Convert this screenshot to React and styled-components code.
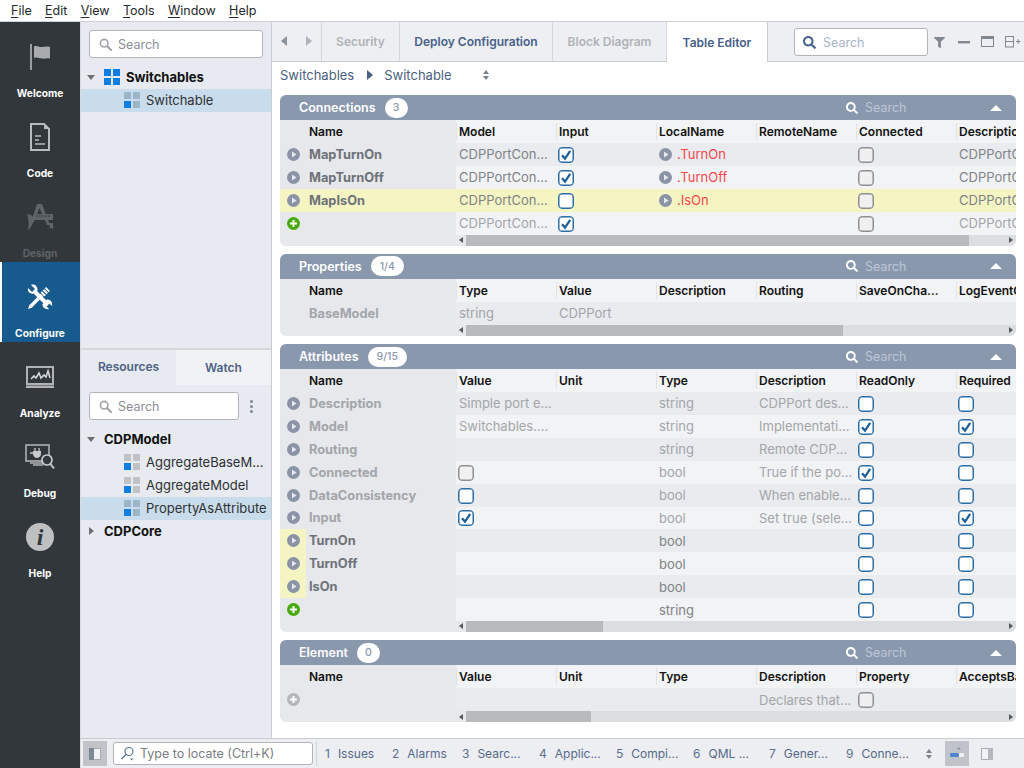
import React from "react";
import styled, { createGlobalStyle } from "styled-components";
import { FaFilter, FaSearch } from "react-icons/fa";

const GlobalStyle = createGlobalStyle`
  html, body {
    margin: 0;
    padding: 0;
    height: 100%;
    overflow: hidden;
  }
  body {
    font-family: Inter, "Noto Sans", sans-serif;
    background: #fff;
  }
  * {
    box-sizing: border-box;
  }
`;

const Page = styled.div`
  width: 1024px;
  height: 768px;
  display: flex;
  flex-direction: column;
  overflow: hidden;
`;

const MenuBar = styled.div`
  height: 22px;
  flex: none;
  display: flex;
  align-items: center;
  gap: 13.3px;
  padding: 0 0 1px 11px;
  font-size: 12.5px;
  color: #26282b;
  background: #fff;
  border-bottom: 1px solid #cfd1d4;
`;

const MenuItem = styled.span`
  u {
    text-underline-offset: 2px;
  }
`;

const Body = styled.div`
  flex: 1;
  min-height: 0;
  display: flex;
`;

const SideBar = styled.div`
  width: 80px;
  flex: none;
  background: #32373b;
  display: flex;
  flex-direction: column;
`;

const SideItem = styled.div`
  height: 80px;
  flex: none;
  display: flex;
  flex-direction: column;
  align-items: center;
  padding-top: 18px;
  background: ${(p) => (p.$active ? "#165a8e" : "transparent")};
  border-left: ${(p) => (p.$active ? "2px solid #fff" : "0")};
  padding-right: ${(p) => (p.$active ? "2px" : "0")};
`;

const SideIcon = styled.div`
  height: 34px;
  display: flex;
  align-items: center;
  justify-content: center;
  color: #fff;
`;

const SideLabel = styled.div`
  margin-top: 12px;
  font-size: 10.2px;
  line-height: 14px;
  font-weight: 700;
  color: ${(p) => (p.$off ? "#5f6468" : "#fff")};
`;

const HelpDisc = styled.div`
  width: 28px;
  height: 28px;
  border-radius: 50%;
  background: #bfc0c1;
  color: #32373b;
  display: flex;
  align-items: center;
  justify-content: center;
  font-family: "Liberation Serif", serif;
  font-style: italic;
  font-weight: 700;
  font-size: 24px;
`;

const Content = styled.div`
  flex: 1;
  min-width: 0;
  display: flex;
  flex-direction: column;
`;

const Upper = styled.div`
  flex: 1;
  min-height: 0;
  display: flex;
`;

const TreeColumn = styled.div`
  width: 192px;
  flex: none;
  display: flex;
  flex-direction: column;
  background: #e7eaf0;
  border-left: 1px solid #d8dadd;
  border-right: 1px solid #c9cbce;
`;

const TreePane = styled.div`
  height: 328px;
  flex: none;
  padding-top: 8px;
  border-bottom: 2px solid #d5d7da;
`;

const LowerPane = styled.div`
  flex: 1;
  min-height: 0;
`;

const SearchRow = styled.div`
  display: flex;
  align-items: center;
  padding: 0 8px;
  margin-bottom: ${(p) => p.$mb}px;
`;

const SearchBox = styled.div`
  flex: 1;
  height: 28px;
  display: flex;
  align-items: center;
  gap: 6px;
  padding-left: 9px;
  background: #fff;
  border: 1px solid #b2b4b7;
  border-radius: 3px;
  font-size: 12.5px;
  color: #8b8e93;
`;

const KebabDots = styled.div`
  width: 24px;
  flex: none;
  display: flex;
  flex-direction: column;
  align-items: center;
  gap: 2px;
  i {
    width: 3px;
    height: 3px;
    border-radius: 50%;
    background: #7e8791;
  }
`;

const TreeRow = styled.div`
  height: 23px;
  display: flex;
  align-items: center;
  padding: 0 0 1px ${(p) => p.$indent}px;
  gap: 6px;
  font-size: 13px;
  white-space: nowrap;
  overflow: hidden;
  font-weight: ${(p) => (p.$bold ? 700 : 400)};
  color: ${(p) => (p.$bold ? "#111" : "#2e3033")};
  background: ${(p) => (p.$selected ? "#c9dcec" : "transparent")};
`;

const Caret = styled.span`
  width: 0;
  height: 0;
  flex: none;
  margin-right: 3px;
  ${(p) =>
    p.$open
      ? "border-left: 4px solid transparent; border-right: 4px solid transparent; border-top: 5px solid #6b6e72;"
      : "border-top: 4px solid transparent; border-bottom: 4px solid transparent; border-left: 5px solid #6b6e72; margin-left: 2px; margin-right: 4px;"}
`;

const SideTabs = styled.div`
  height: 35px;
  display: flex;
  margin-bottom: 7px;
`;

const SideTab = styled.div`
  flex: 1;
  display: flex;
  align-items: center;
  justify-content: center;
  font-size: 12px;
  font-weight: 600;
  color: #4b6285;
  padding-bottom: ${(p) => (p.$light ? "0" : "2px")};
  background: ${(p) => (p.$light ? "#f0f2f5" : "transparent")};
`;

const Main = styled.div`
  flex: 1;
  min-width: 0;
  display: flex;
  flex-direction: column;
  background: #fff;
`;

const TabBar = styled.div`
  height: 40px;
  flex: none;
  display: flex;
  align-items: stretch;
  background: #edeff2;
  border-bottom: 1px solid #c9cbce;
`;

const NavArrows = styled.div`
  width: 50px;
  flex: none;
  display: flex;
  align-items: center;
  justify-content: center;
  gap: 19px;
  padding-bottom: 2px;
  border-right: 1px solid #d4d6d9;
`;

const Arrow = styled.span`
  width: 0;
  height: 0;
  border-top: 5px solid transparent;
  border-bottom: 5px solid transparent;
  ${(p) => (p.$left ? "border-right" : "border-left")}: 6px solid ${(p) => p.$color};
`;

const SmallArrow = styled(Arrow)`
  border-top-width: 3.5px;
  border-bottom-width: 3.5px;
  ${(p) => (p.$left ? "border-right-width" : "border-left-width")}: 4px;
`;

const Tab = styled.div`
  width: ${(p) => p.$w}px;
  flex: none;
  display: flex;
  align-items: center;
  justify-content: center;
  font-size: 12px;
  font-weight: 600;
  color: ${(p) => (p.$off ? "#b0b2b6" : "#48608a")};
  background: ${(p) => (p.$active ? "#fff" : "transparent")};
  border-right: 1px solid #d4d6d9;
  ${(p) => p.$active && "margin-bottom: -1px; border-right-color: #c9cbce;"}
`;

const TabTools = styled.div`
  flex: 1;
  display: flex;
  align-items: center;
  padding: 1px 0 0 26px;
`;

const TabSearch = styled.div`
  width: 134px;
  height: 28px;
  display: flex;
  align-items: center;
  gap: 7px;
  padding-left: 8px;
  background: #fff;
  border: 1px solid #b2b4b7;
  border-radius: 3px;
  font-size: 12.5px;
  color: #a9b4c6;
`;

const ToolIcons = styled.div`
  display: flex;
  align-items: center;
  margin-left: 6px;
  gap: 10px;
`;

const Crumbs = styled.div`
  height: 33px;
  flex: none;
  display: flex;
  align-items: center;
  padding: 0 0 8px 8px;
  font-size: 13px;
  color: #4a6080;
`;

const CrumbSep = styled.span`
  width: 0;
  height: 0;
  margin: 0 11px 0 13px;
  border-top: 5px solid transparent;
  border-bottom: 5px solid transparent;
  border-left: 6px solid #4a6080;
`;

const UpDown = styled.span`
  display: inline-flex;
  flex-direction: column;
  gap: 2px;
  margin-left: ${(p) => p.$ml}px;
  i {
    width: 0;
    height: 0;
    border-left: 3.5px solid transparent;
    border-right: 3.5px solid transparent;
  }
  i:first-child {
    border-bottom: 4px solid #7a8088;
  }
  i:last-child {
    border-top: 4px solid #7a8088;
  }
`;

const Panels = styled.div`
  display: flex;
  flex-direction: column;
  gap: 8.3px;
  padding: 0 8px;
`;

const Panel = styled.section`
  border-radius: 6px;
  overflow: hidden;
  background: #e6e8ec;
`;

const PanelHead = styled.div`
  height: 25px;
  display: flex;
  align-items: center;
  padding-left: 19px;
  background: #8a98ae;
  color: #fff;
  font-size: 12.5px;
  font-weight: 600;
`;

const CountPill = styled.span`
  min-width: 23px;
  height: 20px;
  margin-left: 9px;
  padding: 0 ${(p) => (p.$wide ? "9px" : "4px")};
  display: flex;
  align-items: center;
  justify-content: center;
  border-radius: 10px;
  background: #fff;
  color: #8a98ae;
  font-size: 10.5px;
  font-weight: 500;
`;

const HeadSearch = styled.div`
  margin-left: auto;
  width: 170px;
  display: flex;
  align-items: center;
  gap: 7px;
  font-weight: 400;
  color: #bcc6d5;
  font-size: 12.5px;
`;

const Collapse = styled.span`
  margin-left: auto;
  margin-right: 14px;
  width: 0;
  height: 0;
  border-left: 6px solid transparent;
  border-right: 6px solid transparent;
  border-bottom: 6px solid #fff;
`;

const Row = styled.div`
  height: ${(p) => (p.$head ? "23px" : "22.9px")};
  display: flex;
  overflow: hidden;
  background: ${(p) => (p.$yellow ? "#f5f5c3" : p.$shade ? "#e9ebee" : "#f2f3f5")};
`;

const NameCell = styled.div`
  width: 176px;
  flex: none;
  display: flex;
  align-items: center;
  font-size: ${(p) => (p.$head ? "12px" : "12.8px")};
  font-weight: ${(p) => (p.$head ? 600 : 700)};
  background: ${(p) => (p.$yellow ? "transparent" : "#e6e8ec")};
  color: ${(p) => (p.$head ? "#111" : p.$dim ? "#a3a5a9" : "#6e7278")};
`;

const NameIconSlot = styled.div`
  width: 26px;
  height: 100%;
  flex: none;
  display: flex;
  align-items: center;
  justify-content: center;
  margin-right: 3px;
  background: ${(p) => (p.$yellow ? "#f5f5c3" : "transparent")};
`;

const Cell = styled.div`
  width: 100px;
  flex: none;
  display: flex;
  align-items: center;
  gap: 5px;
  padding-left: 3px;
  white-space: nowrap;
  overflow: hidden;
  font-size: 13px;
  color: ${(p) => (p.$dim ? "#a3a5a9" : "#7f8287")};
`;

const HeadCell = styled.div`
  width: 100px;
  flex: none;
  display: flex;
  align-items: center;
  padding-left: 3px;
  white-space: nowrap;
  overflow: hidden;
  font-size: 12px;
  font-weight: 600;
  color: #111;
  position: relative;
  &:not(:first-child)::before {
    content: "";
    position: absolute;
    left: 0;
    top: 3px;
    bottom: 3px;
    width: 1px;
    background: #e2e3e6;
  }
`;

const RedName = styled.span`
  color: #f4474c;
`;

const Check = styled.span`
  width: 16px;
  height: 16px;
  flex: none;
  margin: 1px 0 0 -1.5px;
  border-radius: 4px;
  display: flex;
  align-items: center;
  justify-content: center;
  border: 1px solid ${(p) => (p.$grey ? "#8e8f91" : "#2b6da5")};
  box-shadow: inset 0 0 0 0.5px ${(p) => (p.$grey ? "#8e8f91" : "#2b6da5")};
  background: ${(p) => (p.$grey ? "#f0f0f1" : "#fff")};
`;

const ScrollRow = styled.div`
  height: 11px;
  display: flex;
`;

const ScrollSpacer = styled.div`
  width: 176px;
  flex: none;
`;

const ScrollTrack = styled.div`
  flex: 1;
  display: flex;
  align-items: stretch;
  background: #dcdde0;
`;

const ScrollEnd = styled.div`
  width: 10px;
  flex: none;
  display: flex;
  align-items: center;
  justify-content: center;
  background: #e6e8ec;
  ${(p) => p.$right && "margin-left: auto; background: transparent;"}
`;

const ScrollThumb = styled.div`
  background: #b8babe;
`;

const StatusBar = styled.div`
  height: 30px;
  flex: none;
  display: flex;
  align-items: center;
  background: #eceef1;
  border-top: 1px solid #c9cbce;
  border-left: 1px solid #d8dadd;
  padding-left: 2px;
`;

const StatusToggle = styled.div`
  width: 24px;
  height: 25px;
  flex: none;
  margin-left: ${(p) => p.$ml || 0}px;
  display: flex;
  align-items: center;
  justify-content: center;
  background: ${(p) => (p.$on ? "#c0c4ca" : "transparent")};
`;

const Locator = styled.div`
  width: 200px;
  height: 23px;
  flex: none;
  margin: 0 3px 0 6px;
  display: flex;
  align-items: center;
  gap: 5px;
  padding-left: 6px;
  background: #fff;
  border: 1px solid #b2b4b7;
  border-radius: 3px;
  font-size: 12.5px;
  color: #7b7e83;
  white-space: nowrap;
`;

const StatusItems = styled.div`
  display: flex;
  align-items: center;
  height: 25px;
  padding-left: 8px;
  border-left: 1px solid #d4d6d9;
`;

const StatusItem = styled.div`
  width: ${(p) => p.$w}px;
  flex: none;
  font-size: 12px;
  color: #56698a;
  white-space: nowrap;
  b {
    font-weight: 400;
    margin-right: 8px;
    color: #5d6f8f;
  }
`;

const Grid4 = ({ tl = "#c0c2c6", tr = "#c0c2c6", bl = "#0f7ee0", br = "#c0c2c6" }) => (
  <svg width="16" height="16" viewBox="0 0 16 16" style={{ flex: "none" }}>
    <rect x="0" y="0" width="7" height="7" fill={tl} />
    <rect x="9" y="0" width="7" height="7" fill={tr} />
    <rect x="0" y="9" width="7" height="7" fill={bl} />
    <rect x="9" y="9" width="7" height="7" fill={br} />
  </svg>
);

const Magnifier = ({ color = "#a0a3a7", size = 13 }) => (
  <svg width={size} height={size} viewBox="0 0 14 14" style={{ flex: "none" }}>
    <circle cx="5.6" cy="5.6" r="4.1" fill="none" stroke={color} strokeWidth="1.7" />
    <path d="M8.8 8.8 L13 13" stroke={color} strokeWidth="2.2" strokeLinecap="round" />
  </svg>
);

const PlayDisc = () => (
  <svg width="13" height="13" viewBox="0 0 13 13" style={{ flex: "none" }}>
    <circle cx="6.5" cy="6.5" r="6.5" fill="#8a94a6" />
    <path d="M5 3.4 L9.6 6.5 L5 9.6 Z" fill="#e6e8ec" />
  </svg>
);

const PlusDisc = ({ color = "#46ab09" }) => (
  <svg width="13" height="13" viewBox="0 0 13 13" style={{ flex: "none" }}>
    <circle cx="6.5" cy="6.5" r="6.5" fill={color} />
    <path d="M6.5 3 V10 M3 6.5 H10" stroke="#fff" strokeWidth="2" />
  </svg>
);

const Tick = () => (
  <svg width="12" height="12" viewBox="0 0 12 12">
    <path d="M2 6.2 L5 9.6 L10.2 1.8" fill="none" stroke="#1d5f96" strokeWidth="2.2" />
  </svg>
);

const FlagIcon = () => (
  <svg width="20" height="26" viewBox="0 0 20 26">
    <rect x="0" y="0" width="2" height="26" fill="#9b9d9f" />
    <path d="M4 2.5 C7 1 9 3.5 12 3 C15 2.6 17 2 20 3 V14.5 C17 13.6 15 15 12 14.6 C9 14.2 7 12.8 4 14 Z" fill="#a9abad" />
  </svg>
);

const DocIcon = () => (
  <svg width="20" height="28" viewBox="0 0 20 28">
    <path d="M1 1 H14 L19 6 V27 H1 Z" fill="none" stroke="#b9bbbc" strokeWidth="2" />
    <path d="M14 1 V6 H19" fill="#b9bbbc" />
    <path d="M5 13 H11 M5 17 H9 M5 21 H15" stroke="#b9bbbc" strokeWidth="1.6" />
  </svg>
);

const DesignIcon = () => (
  <svg width="28" height="28" viewBox="0 0 28 28">
    <path d="M11 1 H16 L24 22 H21 L13.5 5 L8 19 H5 Z" fill="#606468" />
    <rect x="9" y="11" width="18" height="6" fill="#606468" />
    <path d="M11 12 V14 M14 12 V14 M17 12 V14 M20 12 V14 M23 12 V14" stroke="#32373b" />
    <path d="M1 11 L5 12 L8 15 C7 21 5 25 2 27 C3 22 3 17 1 11 Z" fill="#606468" />
    <path d="M23 20 L27 20 L27 26 L24 25 Z" fill="#606468" />
  </svg>
);

const ConfigureIcon = () => (
  <svg width="26" height="26" viewBox="0 0 26 26">
    <path d="M8 8 L21 21" stroke="#fff" strokeWidth="4" />
    <path d="M1 4 L5 8 L8 5 L4 1 C7 -0.5 11 2 10.5 6.5 L8 9 C4 11 0 8 1 4 Z" fill="#fff" />
    <path d="M25 22 L21.5 19 L19 21.5 L22 25 C19 26 15 23.5 15.5 20 L20 15.5 C23 15 26 18 25 22 Z" fill="#fff" />
    <path d="M15 11 L4 22" stroke="#fff" strokeWidth="3.4" />
    <path d="M1 25 L2.5 20.5 L5.5 23.5 Z" fill="#fff" />
    <path d="M15.5 10.5 L21 5" stroke="#fff" strokeWidth="5.4" strokeDasharray="2 1" />
  </svg>
);

const AnalyzeIcon = () => (
  <svg width="28" height="22" viewBox="0 0 28 22">
    <rect x="1" y="1" width="26" height="17" fill="#32373b" stroke="#b0b2b4" strokeWidth="2" />
    <rect x="0" y="19.5" width="28" height="2.5" fill="#b0b2b4" />
    <path d="M5 13 L8 10 L10 12 L13 7 L15 12 L18 9 L20 11 L22 5 L24 12" fill="none" stroke="#d5d6d7" strokeWidth="1.6" />
  </svg>
);

const DebugIcon = () => (
  <svg width="30" height="26" viewBox="0 0 30 26">
    <rect x="1" y="1" width="23" height="16" fill="none" stroke="#b0b2b4" strokeWidth="1.6" />
    <path d="M8 21 H18 M5 19 H20" stroke="#b0b2b4" strokeWidth="1.6" />
    <path d="M8 7 H16 V10 C16 12 14 14 12 14 C10 14 8 12 8 10 Z" fill="#c9cacb" />
    <path d="M10 4 V7 M14 4 V7 M5 9 H8" stroke="#c9cacb" strokeWidth="1.3" />
    <circle cx="22" cy="16" r="5" fill="#32373b" stroke="#c9cacb" strokeWidth="1.7" />
    <path d="M25.5 20 L29 24.5" stroke="#c9cacb" strokeWidth="2" />
  </svg>
);

const WindowIcon = () => (
  <svg width="14" height="12" viewBox="0 0 14 12">
    <rect x="0.5" y="0.5" width="12" height="10" fill="none" stroke="#80878f" />
    <rect x="0.5" y="0.5" width="12" height="2.5" fill="#80878f" />
  </svg>
);

const SplitPlusIcon = () => (
  <svg width="16" height="12" viewBox="0 0 16 12">
    <rect x="0.5" y="0.5" width="8" height="10.5" fill="none" stroke="#80878f" />
    <path d="M0.5 5.5 H8.5 M11 5.5 H15.5 M13.2 3.2 V7.8" stroke="#80878f" />
  </svg>
);

const SideToggleIcon = ({ dark }) => (
  <svg width="12" height="12" viewBox="0 0 12 12">
    <rect x="0.5" y="0.5" width="11" height="11" fill="#f0f1f3" stroke="#a6acb4" />
    {dark ? (
      <rect x="0" y="0" width="5" height="12" fill="#7c8894" />
    ) : (
      <rect x="7" y="0" width="5" height="12" fill="#b3b7bc" />
    )}
  </svg>
);

const LocatorIcon = () => (
  <svg width="15" height="15" viewBox="0 0 15 15" style={{ flex: "none" }}>
    <circle cx="9" cy="5.5" r="4" fill="none" stroke="#5c7596" strokeWidth="1.2" />
    <path d="M6 8.5 L1.5 13" stroke="#5c7596" strokeWidth="1.4" />
    <path d="M10 12.5 H13.5 L11.7 14.5 Z" fill="#5c7596" />
  </svg>
);

const BarsIcon = () => (
  <svg width="14" height="16" viewBox="0 0 14 16">
    <path d="M9 1 L11 3.5 H7 Z" fill="#8d97a3" />
    <rect x="0" y="7" width="14" height="4" rx="1" fill="#eef0f3" />
    <rect x="0" y="7" width="9" height="4" rx="1" fill="#4f86cf" />
  </svg>
);

const sideItems = [
  { label: "Welcome", icon: <FlagIcon /> },
  { label: "Code", icon: <DocIcon /> },
  { label: "Design", icon: <DesignIcon />, off: true },
  { label: "Configure", icon: <ConfigureIcon />, active: true },
  { label: "Analyze", icon: <AnalyzeIcon /> },
  { label: "Debug", icon: <DebugIcon /> },
  { label: "Help", icon: <HelpDisc>i</HelpDisc> },
];

const on = { check: true };
const off = { check: false };
const grey = { check: false, grey: true };

const panels = [
  {
    title: "Connections",
    count: "3",
    columns: ["Model", "Input", "LocalName", "RemoteName", "Connected", "Description"],
    thumb: 503,
    rows: [
      { name: "MapTurnOn", icon: "play", cells: ["CDPPortCon...", on, { link: ".TurnOn" }, "", grey, "CDPPortCon"] },
      { name: "MapTurnOff", icon: "play", cells: ["CDPPortCon...", on, { link: ".TurnOff" }, "", grey, "CDPPortCon"] },
      { name: "MapIsOn", icon: "play", yellow: true, cells: ["CDPPortCon...", off, { link: ".IsOn" }, "", grey, "CDPPortCon"] },
      { icon: "plus", dim: true, cells: ["CDPPortCon...", on, "", "", grey, "CDPPortCon"] },
    ],
  },
  {
    title: "Properties",
    count: "1/4",
    wide: true,
    columns: ["Type", "Value", "Description", "Routing", "SaveOnCha...", "LogEventOn"],
    thumb: 377,
    rows: [{ name: "BaseModel", dim: true, cells: ["string", "CDPPort", "", "", "", ""] }],
  },
  {
    title: "Attributes",
    count: "9/15",
    wide: true,
    columns: ["Value", "Unit", "Type", "Description", "ReadOnly", "Required"],
    thumb: 137,
    rows: [
      { name: "Description", icon: "play", dim: true, cells: ["Simple port e...", "", "string", "CDPPort des...", off, off] },
      { name: "Model", icon: "play", dim: true, cells: ["Switchables....", "", "string", "Implementati...", on, on] },
      { name: "Routing", icon: "play", dim: true, cells: ["", "", "string", "Remote CDP...", off, off] },
      { name: "Connected", icon: "play", dim: true, cells: [grey, "", "bool", "True if the po...", on, off] },
      { name: "DataConsistency", icon: "play", dim: true, cells: [off, "", "bool", "When enable...", off, off] },
      { name: "Input", icon: "play", dim: true, cells: [on, "", "bool", "Set true (sele...", off, on] },
      { name: "TurnOn", icon: "play", mark: true, cells: ["", "", "bool", "", off, off] },
      { name: "TurnOff", icon: "play", mark: true, cells: ["", "", "bool", "", off, off] },
      { name: "IsOn", icon: "play", mark: true, cells: ["", "", "bool", "", off, off] },
      { icon: "plus", cells: ["", "", "string", "", off, off] },
    ],
  },
  {
    title: "Element",
    count: "0",
    columns: ["Value", "Unit", "Type", "Description", "Property", "AcceptsBase"],
    thumb: 125,
    rows: [{ icon: "plusGrey", dim: true, cells: ["", "", "", "Declares that...", grey, ""] }],
  },
];

const statusItems = [
  ["1", "Issues", 67],
  ["2", "Alarms", 70],
  ["3", "Searc...", 77],
  ["4", "Applic...", 77],
  ["5", "Compi...", 77],
  ["6", "QML ...", 76],
  ["7", "Gener...", 77],
  ["9", "Conne...", 80],
];

function DataCell({ value, dim }) {
  if (typeof value === "object" && value.link) {
    return (
      <Cell>
        <PlayDisc />
        <RedName>{value.link}</RedName>
      </Cell>
    );
  }
  if (typeof value === "object") {
    return (
      <Cell>
        <Check $grey={value.grey}>{value.check && <Tick />}</Check>
      </Cell>
    );
  }
  return <Cell $dim={dim}>{value}</Cell>;
}

function RowIcon({ kind }) {
  if (kind === "play") return <PlayDisc />;
  if (kind === "plus") return <PlusDisc />;
  if (kind === "plusGrey") return <PlusDisc color="#b4b6ba" />;
  return null;
}

function TablePanel({ panel }) {
  return (
    <Panel>
      <PanelHead>
        {panel.title}
        <CountPill $wide={panel.wide}>{panel.count}</CountPill>
        <HeadSearch>
          <FaSearch size={12} color="#fff" />
          Search
          <Collapse />
        </HeadSearch>
      </PanelHead>
      <Row $head>
        <NameCell $head>
          <NameIconSlot />
          Name
        </NameCell>
        {panel.columns.map((c) => (
          <HeadCell key={c}>{c}</HeadCell>
        ))}
      </Row>
      {panel.rows.map((row, i) => (
        <Row key={i} $shade={i % 2 === 0} $yellow={row.yellow}>
          <NameCell $dim={row.dim} $yellow={row.yellow}>
            <NameIconSlot $yellow={row.mark}>
              <RowIcon kind={row.icon} />
            </NameIconSlot>
            {row.name}
          </NameCell>
          {row.cells.map((c, j) => (
            <DataCell key={j} value={c} dim={row.dim} />
          ))}
        </Row>
      ))}
      <ScrollRow>
        <ScrollSpacer />
        <ScrollTrack>
          <ScrollEnd>
            <SmallArrow $left $color="#55585c" />
          </ScrollEnd>
          <ScrollThumb style={{ width: panel.thumb }} />
          <ScrollEnd $right>
            <SmallArrow $color="#55585c" />
          </ScrollEnd>
        </ScrollTrack>
      </ScrollRow>
    </Panel>
  );
}

export default function App() {
  return (
    <Page>
      <GlobalStyle />
      <MenuBar>
        {["File", "Edit", "View", "Tools", "Window", "Help"].map((m) => (
          <MenuItem key={m}>
            <u>{m[0]}</u>
            {m.slice(1)}
          </MenuItem>
        ))}
      </MenuBar>
      <Body>
        <SideBar>
          {sideItems.map((s) => (
            <SideItem key={s.label} $active={s.active}>
              <SideIcon>{s.icon}</SideIcon>
              <SideLabel $off={s.off}>{s.label}</SideLabel>
            </SideItem>
          ))}
        </SideBar>
        <Content>
          <Upper>
            <TreeColumn>
              <TreePane>
                <SearchRow $mb={8}>
                  <SearchBox>
                    <Magnifier />
                    Search
                  </SearchBox>
                </SearchRow>
                <TreeRow $indent={6} $bold>
                  <Caret $open />
                  <Grid4 tl="#0f7ee0" tr="#0f7ee0" br="#0f7ee0" />
                  Switchables
                </TreeRow>
                <TreeRow $indent={43} $selected>
                  <Grid4 tl="#9ab4c8" tr="#9ab4c8" br="#9ab4c8" />
                  Switchable
                </TreeRow>
              </TreePane>
              <LowerPane>
                <SideTabs>
                  <SideTab>Resources</SideTab>
                  <SideTab $light>Watch</SideTab>
                </SideTabs>
                <SearchRow $mb={8}>
                  <SearchBox>
                    <Magnifier />
                    Search
                  </SearchBox>
                  <KebabDots>
                    <i />
                    <i />
                    <i />
                  </KebabDots>
                </SearchRow>
                <TreeRow $indent={6} $bold>
                  <Caret $open />
                  CDPModel
                </TreeRow>
                <TreeRow $indent={43}>
                  <Grid4 />
                  AggregateBaseM...
                </TreeRow>
                <TreeRow $indent={43}>
                  <Grid4 />
                  AggregateModel
                </TreeRow>
                <TreeRow $indent={43} $selected>
                  <Grid4 tl="#9ab4c8" tr="#9ab4c8" br="#9ab4c8" />
                  PropertyAsAttribute
                </TreeRow>
                <TreeRow $indent={6} $bold>
                  <Caret />
                  CDPCore
                </TreeRow>
              </LowerPane>
            </TreeColumn>
            <Main>
              <TabBar>
                <NavArrows>
                  <Arrow $left $color="#8b929b" />
                  <Arrow $color="#b0b4ba" />
                </NavArrows>
                <Tab $w={78} $off>
                  Security
                </Tab>
                <Tab $w={153}>Deploy Configuration</Tab>
                <Tab $w={114} $off>
                  Block Diagram
                </Tab>
                <Tab $w={101} $active>
                  Table Editor
                </Tab>
                <TabTools>
                  <TabSearch>
                    <FaSearch size={13} color="#47648c" />
                    Search
                  </TabSearch>
                  <ToolIcons>
                    <FaFilter size={11} color="#80878f" />
                    <svg width="14" height="12" viewBox="0 0 14 12" style={{ marginLeft: 2 }}>
                      <rect x="1" y="5" width="12" height="2.4" fill="#80878f" />
                    </svg>
                    <WindowIcon />
                    <SplitPlusIcon />
                  </ToolIcons>
                </TabTools>
              </TabBar>
              <Crumbs>
                Switchables
                <CrumbSep />
                Switchable
                <UpDown $ml={31}>
                  <i />
                  <i />
                </UpDown>
              </Crumbs>
              <Panels>
                {panels.map((p) => (
                  <TablePanel key={p.title} panel={p} />
                ))}
              </Panels>
            </Main>
          </Upper>
          <StatusBar>
            <StatusToggle $on>
              <SideToggleIcon dark />
            </StatusToggle>
            <Locator>
              <LocatorIcon />
              Type to locate (Ctrl+K)
            </Locator>
            <StatusItems>
              {statusItems.map(([n, t, w]) => (
                <StatusItem key={n} $w={w}>
                  <b>{n}</b>
                  {t}
                </StatusItem>
              ))}
              <UpDown $ml={0}>
                <i />
                <i />
              </UpDown>
              <StatusToggle $on $ml={13}>
                <BarsIcon />
              </StatusToggle>
              <StatusToggle $ml={6}>
                <SideToggleIcon />
              </StatusToggle>
            </StatusItems>
          </StatusBar>
        </Content>
      </Body>
    </Page>
  );
}
